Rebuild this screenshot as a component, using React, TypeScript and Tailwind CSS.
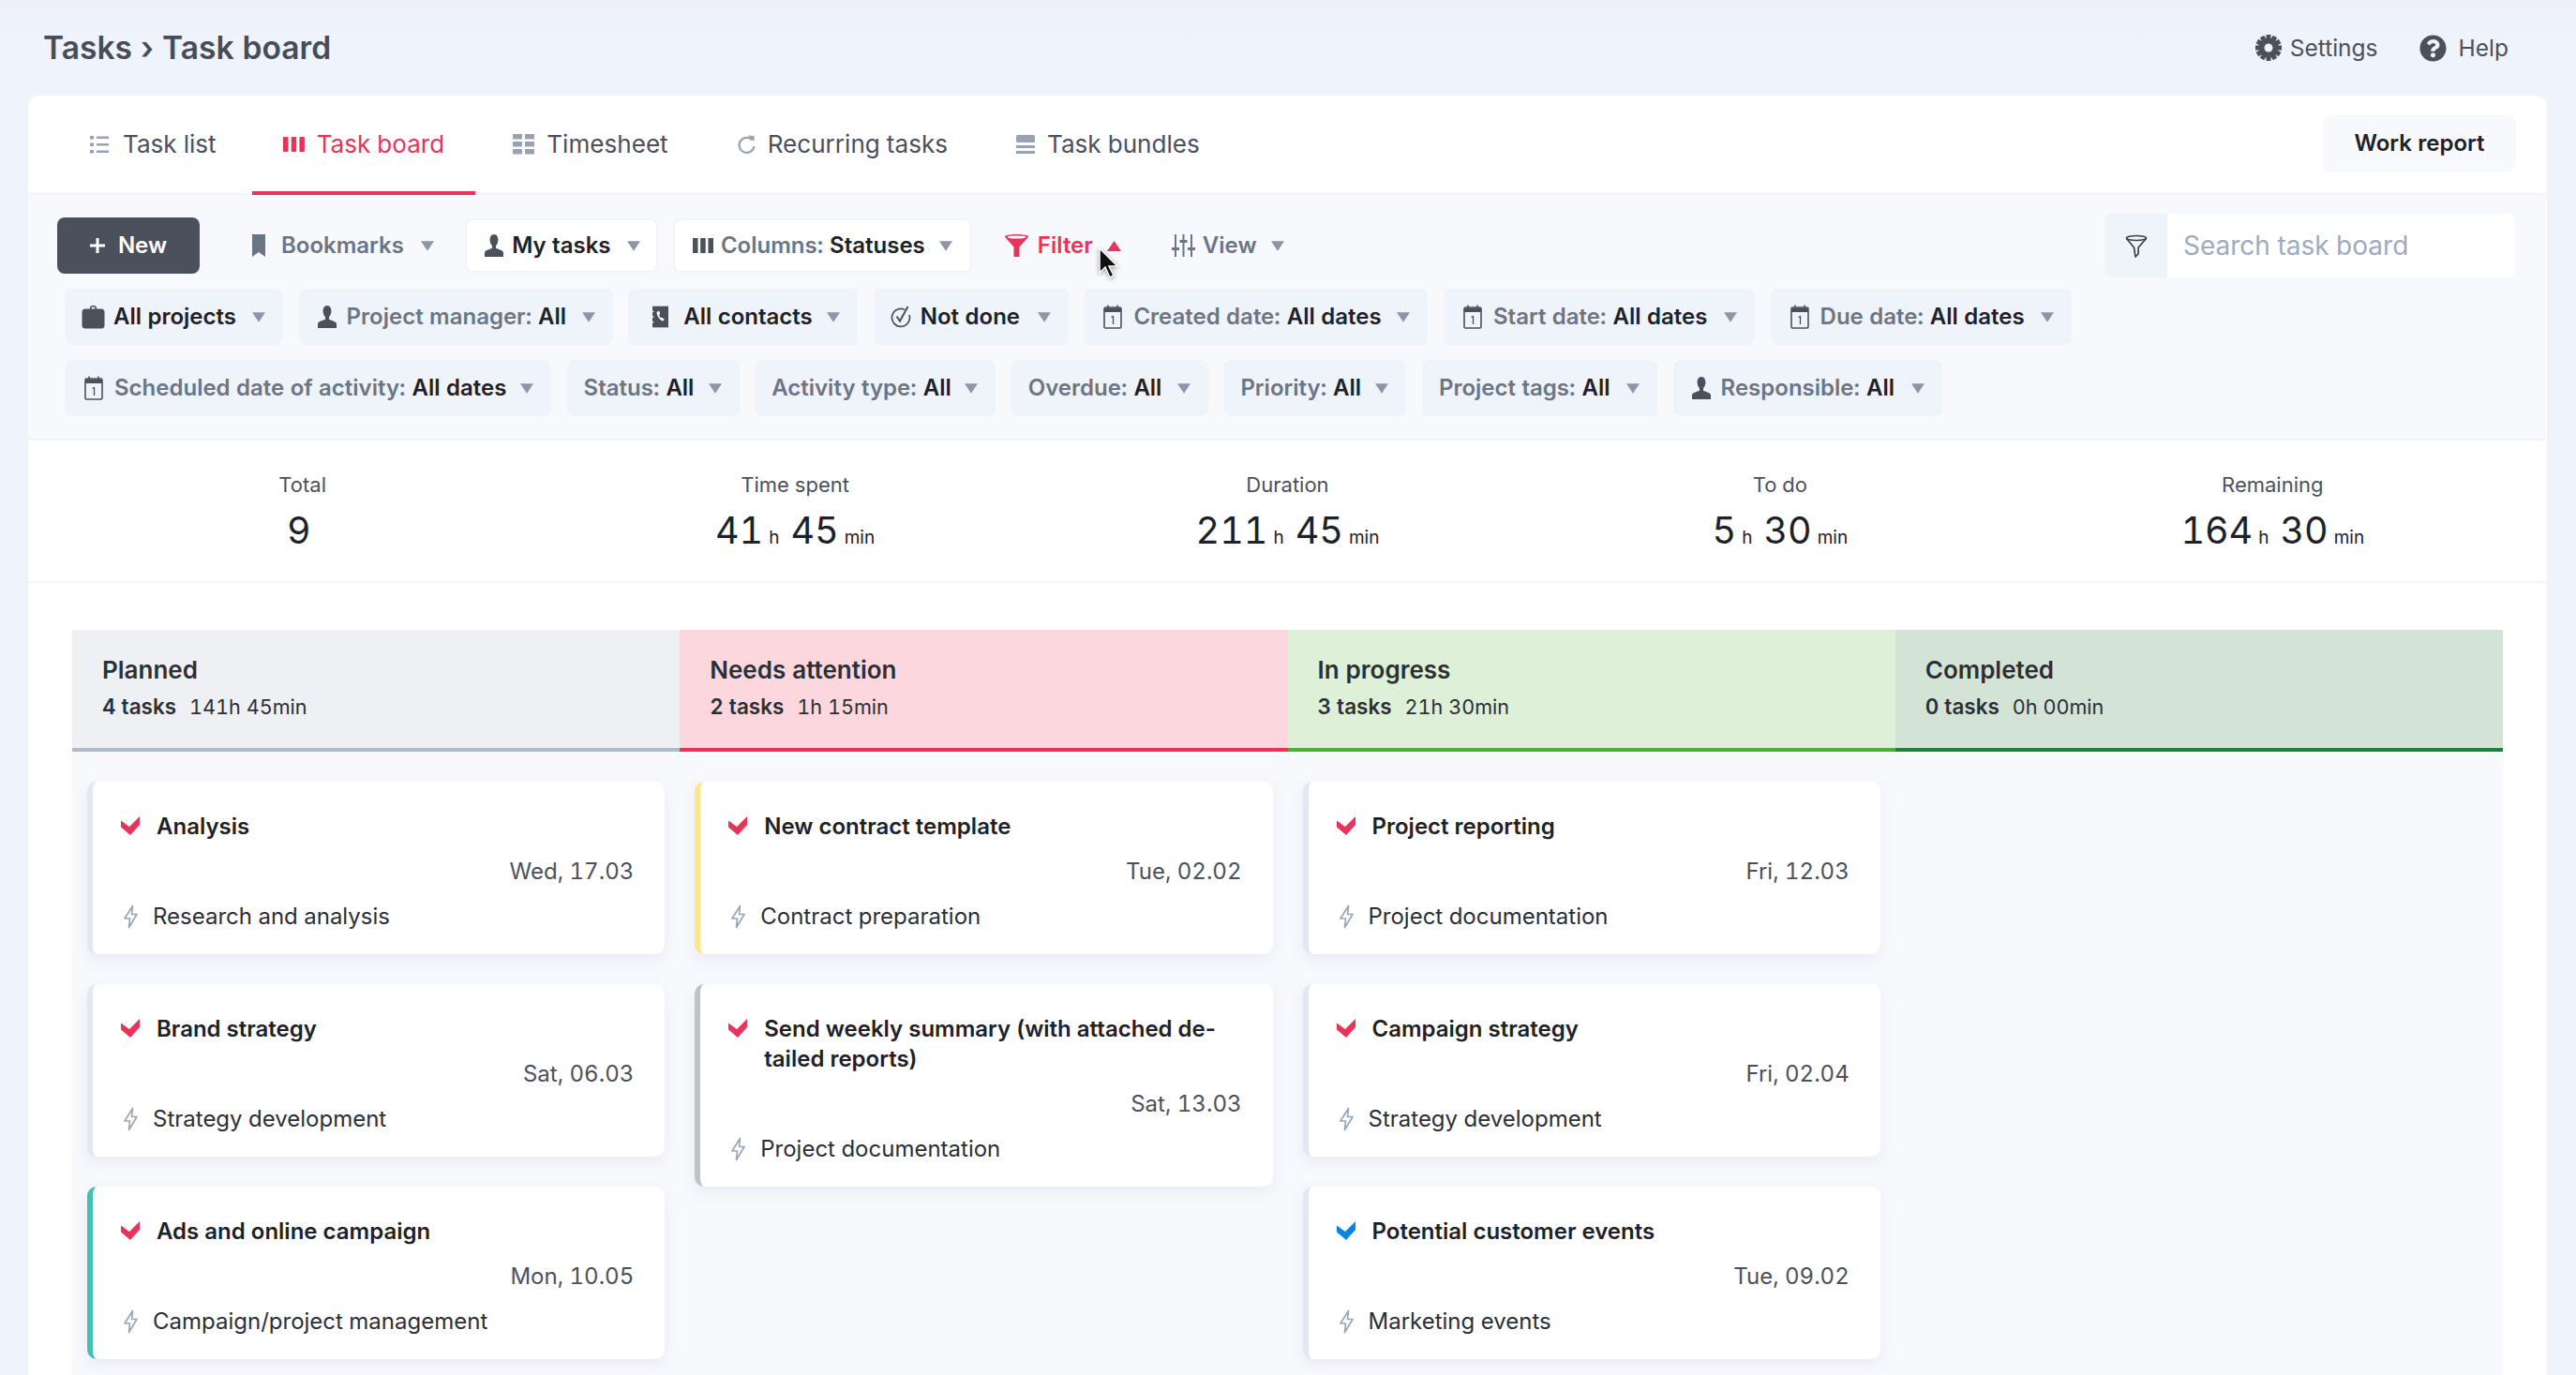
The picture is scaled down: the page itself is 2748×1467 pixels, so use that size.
import { FaQuestionCircle } from 'react-icons/fa';

const font = { fontFamily: 'Inter, "Noto Sans", sans-serif' };

function Caret({ up = false, color = 'fill-[#8d96a6]' }: { up?: boolean; color?: string }) {
  return (
    <svg width={up ? 15 : 14} height="11" viewBox="0 0 15 11" className={`shrink-0 ${color}`}>
      <path d={up ? 'M7.5 0 15 11H0z' : 'M0 0h15L7.5 11z'} />
    </svg>
  );
}

function PersonIcon({ className }: { className?: string }) {
  return (
    <svg width="24" height="24" viewBox="0 0 24 24" className={className} fill="currentColor">
      <path d="M12 0C9 0 7.600 2.800 7.600 6c0 2.600 1 4.800 2.400 6.200v2.600c-2.200 1.200-7 2-8 4.400V24h20v-4.800c-1-2.400-5.800-3.200-8-4.400v-2.600c1.400-1.400 2.400-3.600 2.400-6.200C16.400 2.800 15 0 12 0z" />
    </svg>
  );
}

function CalendarIcon() {
  return (
    <svg width="20" height="26" viewBox="0 0 20 26" className="mx-[3px] shrink-0 text-[#4b515c]">
      <rect x="1" y="3" width="18" height="22" rx="1.5" fill="none" stroke="currentColor" strokeWidth="1.6" />
      <path d="M1 3.500h18V8H1z" fill="currentColor" />
      <path d="M5 0.500v3M15 0.500v3" stroke="currentColor" strokeWidth="1.6" />
      <path d="M8.500 13.500 10.500 12.500V21" fill="none" stroke="currentColor" strokeWidth="1.300" />
    </svg>
  );
}

function BriefcaseIcon() {
  return (
    <svg width="25" height="26" viewBox="0 0 25 26" className="shrink-0 text-[#4b515c]" fill="currentColor">
      <path d="M9 3.500C9 2 10 1 11.500 1h2C15 1 16 2 16 3.500V5h-1.600V3.500c0-.6-.4-.9-.9-.9h-2c-.5 0-.9.3-.9.9V5H9z" />
      <rect x="0.500" y="4.500" width="24" height="21" rx="3.500" />
    </svg>
  );
}

function ContactsIcon() {
  return (
    <svg width="17" height="24" viewBox="0 0 18 24" className="ml-[8px] mr-[7px] shrink-0 text-[#4b515c]">
      <path d="M0 0h18v24H0z" fill="currentColor" />
      <path d="M5 6.500c-.5 3.500 2.500 8.500 6.500 10.500l2-2-3-2.500-1 .8c-1-1-1.800-2.400-2-3.800l1.200-.5-1-3.500z" fill="#fff" />
      <path d="M0 5l2 1-2 1zM0 11l2 1-2 1zM0 17l2 1-2 1z" fill="#fff" />
    </svg>
  );
}

function NotDoneIcon() {
  return (
    <svg width="22" height="24" viewBox="0 0 22 24" fill="none" className="mr-[1px] shrink-0 text-[#4b515c]" stroke="currentColor">
      <path d="M15 4.300A9.500 9.500 0 1 0 20 10" strokeWidth="1.700" />
      <path d="M6.500 11.500 10 16.500 18.500 1" strokeWidth="2" />
    </svg>
  );
}

function BoltIcon() {
  return (
    <svg width="15" height="26" viewBox="0 0 15 26" fill="none" className="shrink-0 text-[#9aa5b5]" stroke="currentColor" strokeWidth="1.700" strokeLinejoin="round">
      <path d="M9.500 1.500 1 15h5.500L5.500 24.500 14 10.500H8.500z" />
    </svg>
  );
}

function CheckMark({ color }: { color: string }) {
  return (
    <svg width="20" height="20" viewBox="0 0 20 20" className={`shrink-0 ${color}`} fill="currentColor">
      <path d="M0 4.500 9 11 20 0v9L10 20 0 11.500z" />
    </svg>
  );
}

function GearIcon() {
  const teeth = [0, 30, 60, 90, 120, 150];
  return (
    <svg width="28" height="28" viewBox="0 0 28 28" className="text-[#4b515c]">
      {teeth.map((a) => (
        <rect key={a} x="11.500" y="0" width="5" height="28" fill="currentColor" transform={`rotate(${a} 14 14)`} />
      ))}
      <circle cx="14" cy="14" r="10.500" fill="currentColor" />
      <circle cx="14" cy="14" r="4.500" fill="#eff3fb" />
    </svg>
  );
}

function TabIcon({ name, active }: { name: string; active?: boolean }) {
  const color = active ? 'text-[#e8345a]' : 'text-[#98a2b3]';
  if (name === 'list') {
    return (
      <svg width="20" height="20" viewBox="0 0 20 20" className={`mr-[2px] ${color}`} fill="currentColor">
        <path d="M0 1h4v3.500H0zM0 8.500h4V12H0zM0 16h4v3.500H0zM7 1.500h13v2.500H7zM7 9h13v2.500H7zM7 16.500h13V19H7z" />
      </svg>
    );
  }
  if (name === 'board') {
    return (
      <svg width="23" height="20" viewBox="0 0 23 20" className={color} fill="currentColor">
        <rect x="0" y="2" width="5.500" height="16" rx="1" />
        <rect x="8.700" y="2" width="5.500" height="16" rx="1" />
        <rect x="17.400" y="2" width="5.500" height="16" rx="1" />
      </svg>
    );
  }
  if (name === 'sheet') {
    return (
      <svg width="23" height="22" viewBox="0 0 23 22" className={color} fill="currentColor">
        <path d="M0 0h10v5.500H0zM13 0h10v5.500H13zM0 8h10v5.500H0zM13 8h10v5.500H13zM0 16h10v5.500H0zM13 16h10v5.500H13z" />
      </svg>
    );
  }
  if (name === 'repeat') {
    return (
      <svg width="20" height="22" viewBox="0 0 20 22" fill="none" className={color}>
        <path d="M16.500 6.500A8 8 0 1 0 18.500 13" stroke="currentColor" strokeWidth="2.200" />
        <path d="M11.500 1.500 18.500 2v6z" fill="currentColor" />
      </svg>
    );
  }
  return (
    <svg width="20" height="20" viewBox="0 0 20 20" className={color} fill="currentColor">
      <rect x="0" y="0" width="20" height="8" rx="1.500" />
      <rect x="0" y="11" width="20" height="3" />
      <rect x="0" y="17" width="20" height="3" />
    </svg>
  );
}

const tabs = [
  { label: 'Task list', icon: 'list' },
  { label: 'Task board', icon: 'board', active: true },
  { label: 'Timesheet', icon: 'sheet' },
  { label: 'Recurring tasks', icon: 'repeat' },
  { label: 'Task bundles', icon: 'bundle' },
];

function Chip({ icon, label, value, width }: { icon?: React.ReactNode; label?: string; value: string; width: string }) {
  return (
    <div className={`flex h-[60px] items-center rounded-lg bg-[#eff3fa] pl-[18px] pr-[19px] text-[24px] font-semibold ${width}`}>
      {icon && <span className="mr-[9px] flex shrink-0">{icon}</span>}
      {label && <span className="mr-[7px] text-[#6c7584]">{label}</span>}
      <span className="text-[#1e2127]">{value}</span>
      <span className="ml-auto"><Caret /></span>
    </div>
  );
}

function Stat({ label, parts }: { label: string; parts: [string, string][] }) {
  return (
    <div className="flex flex-col items-center">
      <div className="text-[22px] leading-[30px] text-[#4b515c]">{label}</div>
      <div className="mt-[9px] flex items-baseline gap-[12px] leading-[50px] text-[#1e2127]">
        {parts.map(([n, unit]) => (
          <span key={n} className="flex items-baseline gap-[6px]">
            <span className={`text-[39.500px] ${unit ? '' : 'mr-[8px]'}`}>{n}</span>
            {unit && <span className="text-[19px]">{unit}</span>}
          </span>
        ))}
      </div>
    </div>
  );
}

type Task = { title: string; date: string; sub: string; border: string; blue?: boolean };

const columns: { name: string; count: string; time: string; head: string; tasks: Task[] }[] = [
  {
    name: 'Planned',
    count: '4 tasks',
    time: '141h 45min',
    head: 'bg-[#eff0f4] border-[#aebbcc]',
    tasks: [
      { title: 'Analysis', date: 'Wed, 17.03', sub: 'Research and analysis', border: 'border-[#e2e8f1]' },
      { title: 'Brand strategy', date: 'Sat, 06.03', sub: 'Strategy development', border: 'border-[#e2e8f1]' },
      { title: 'Ads and online campaign', date: 'Mon, 10.05', sub: 'Campaign/project management', border: 'border-[#3fc1b4]' },
    ],
  },
  {
    name: 'Needs attention',
    count: '2 tasks',
    time: '1h 15min',
    head: 'bg-[#fcd7de] border-[#e8345a]',
    tasks: [
      { title: 'New contract template', date: 'Tue, 02.02', sub: 'Contract preparation', border: 'border-[#fde68a]' },
      { title: 'Send weekly summary (with attached de-tailed reports)', date: 'Sat, 13.03', sub: 'Project documentation', border: 'border-[#c2c2c2]' },
    ],
  },
  {
    name: 'In progress',
    count: '3 tasks',
    time: '21h 30min',
    head: 'bg-[#def0d8] border-[#4cae33]',
    tasks: [
      { title: 'Project reporting', date: 'Fri, 12.03', sub: 'Project documentation', border: 'border-[#e2e8f1]' },
      { title: 'Campaign strategy', date: 'Fri, 02.04', sub: 'Strategy development', border: 'border-[#e2e8f1]' },
      { title: 'Potential customer events', date: 'Tue, 09.02', sub: 'Marketing events', border: 'border-[#e2e8f1]', blue: true },
    ],
  },
  {
    name: 'Completed',
    count: '0 tasks',
    time: '0h 00min',
    head: 'bg-[#d3e4d7] border-[#1f7f3f]',
    tasks: [],
  },
];

function TaskCard({ task }: { task: Task }) {
  return (
    <div className={`rounded-[10px] border-l-[6px] bg-white pb-[24px] pl-[30px] pr-[33px] pt-[32px] shadow-[0_6px_16px_rgba(90,105,135,0.09)] ${task.border}`}>
      <div className="flex gap-[18px]">
        <span className="mt-[5px]"><CheckMark color={task.blue ? 'text-[#0a84e3]' : 'text-[#e8345a]'} /></span>
        <div className="text-[24px] font-semibold normal-nums leading-[32px] text-[#1e2127]">{task.title}</div>
      </div>
      <div className="mt-[16px] text-right text-[24px] leading-[32px] text-[#4b515c]">{task.date}</div>
      <div className="mt-[16px] flex items-center gap-[16px] pl-[3px] text-[24px] leading-[32px] text-[#2b2f36]">
        <BoltIcon />
        <span>{task.sub}</span>
      </div>
    </div>
  );
}

export default function App() {
  return (
    <div style={font} className="relative flex h-screen flex-col overflow-hidden bg-gradient-to-b from-[#edf0f8] via-[#eff3fb] via-[3%] to-[#eff3fb] tabular-nums">
      <header className="flex h-[102px] shrink-0 items-center justify-between pl-[46px] pr-[72px]">
        <div className="text-[33.600px] font-semibold text-[#474d58]">Tasks › Task board</div>
        <div className="flex items-center gap-[44px] text-[24.500px] text-[#4b515c]">
          <div className="flex items-center gap-[9px]"><GearIcon />Settings</div>
          <div className="flex items-center gap-[13px]"><FaQuestionCircle size={29} />Help</div>
        </div>
      </header>

      <main className="ml-[30px] flex w-[2687px] flex-1 flex-col rounded-t-xl bg-white">
        {/* tabs */}
        <div className="flex h-[106px] shrink-0 items-center justify-between border-b-2 border-[#eff3fa] pl-[33px] pr-[33px]">
          <div className="flex h-full gap-[7px]">
            {tabs.map((t) => (
              <div
                key={t.label}
                className={`flex h-[106px] items-center gap-[13px] border-b-[4px] px-[33px] pt-[1px] text-[26.100px] first:-mr-[2px] ${t.active ? 'border-[#e8345a] text-[#e8345a]' : 'border-transparent text-[#4b515c]'}`}
              >
                <TabIcon name={t.icon} active={t.active} />
                {t.label}
              </div>
            ))}
          </div>
          <div className="mb-[2px] flex h-[60px] w-[206px] items-center justify-center rounded-lg bg-[#f7f9fd] text-[24px] font-semibold text-[#1e2127]">
            Work report
          </div>
        </div>

        {/* toolbar */}
        <div className="h-[262px] shrink-0 border-b-2 border-[#eff3fa] bg-[#f7f9fd] pl-[31px] pr-[34px] pt-[20px]">
          <div className="flex h-[68px] items-center text-[24px] font-semibold text-[#6c7584]">
            <div className="flex h-[60px] w-[152px] items-center justify-center gap-[14px] rounded-lg bg-[#4b515c] text-white">
              <svg width="16" height="16" viewBox="0 0 16 16" fill="currentColor"><path d="M6.500 0h3v6.500H16v3H9.500V16h-3V9.500H0v-3h6.500z" /></svg>
              New
            </div>
            <div className="ml-[56px] flex items-center">
              <svg width="14" height="24" viewBox="0 0 14 24" className="text-[#6c7584]" fill="currentColor"><path d="M0 0h14v24l-7-5-7 5z" /></svg>
              <span className="ml-[17px]">Bookmarks</span>
              <span className="ml-[18px]"><Caret /></span>
            </div>
            <div className="ml-[33px] flex h-[58px] w-[206px] items-center justify-center rounded-lg border-2 border-[#f0f3fa] bg-white text-[#1e2127]">
              <PersonIcon className="text-[#4b515c]" />
              <span className="ml-[7px]">My tasks</span>
              <span className="ml-[17px]"><Caret /></span>
            </div>
            <div className="ml-[16px] flex h-[58px] w-[319px] items-center justify-center rounded-lg border-2 border-[#f0f3fa] bg-white">
              <svg width="22" height="16" viewBox="0 0 22 16" className="text-[#4b515c]" fill="currentColor"><path d="M0 0h5.500v16H0zM8.200 0h5.500v16H8.200zM16.500 0H22v16h-5.500z" /></svg>
              <span className="ml-[8px]">Columns:</span>
              <span className="ml-[7px] text-[#1e2127]">Statuses</span>
              <span className="ml-[15px]"><Caret /></span>
            </div>
            <div className="ml-[35px] flex items-center text-[#e8345a]">
              <svg width="25" height="24" viewBox="0 0 25 24">
                <path d="M0 2.500C0 1 5.500 0 12.500 0S25 1 25 2.500c0 .6-.4 1-1 1.500l-8.500 9.500V24h-6V13.500L1 4C.4 3.500 0 3.100 0 2.500z" fill="#e8345a" />
                <ellipse cx="12.500" cy="3" rx="10" ry="1.600" fill="#fff" />
              </svg>
              <span className="ml-[10px]">Filter</span>
              <span className="ml-[15px]"><Caret up color="fill-[#e8345a]" /></span>
            </div>
            <div className="ml-[54px] flex items-center">
              <svg width="25" height="24" viewBox="0 0 25 24" fill="currentColor">
                <path d="M3 0h2v24H3zM11.500 0h2v24h-2zM20 0h2v24h-2zM0 14h8v3H0zM8.500 6h8v3h-8zM17 14h8v3h-8z" />
              </svg>
              <span className="ml-[8px]">View</span>
              <span className="ml-[15px]"><Caret /></span>
            </div>
            <div className="ml-auto flex h-[68px] w-[438px] overflow-hidden rounded-lg bg-white">
              <div className="flex w-[67px] items-center justify-center bg-[#eff3fa]">
                <svg width="24" height="25" viewBox="0 0 24 25" fill="none" stroke="#3c414a" strokeWidth="1.700" strokeLinejoin="round">
                  <ellipse cx="12" cy="4" rx="10.500" ry="2.500" />
                  <path d="M1.500 4.500 9.500 14l1.500 10 3-3 .2-7L22.500 4.500" />
                </svg>
              </div>
              <div className="flex items-center pl-[17px] text-[28px] font-normal text-[#a0abbb]">Search task board</div>
            </div>
          </div>

          <div className="ml-[8px] mt-[12px] flex gap-[16.600px]">
            <Chip width="w-[233px]" icon={<BriefcaseIcon />} value="All projects" />
            <Chip width="w-[335px]" icon={<PersonIcon className="text-[#4b515c]" />} label="Project manager:" value="All" />
            <Chip width="w-[245px]" icon={<ContactsIcon />} value="All contacts" />
            <Chip width="w-[208px]" icon={<NotDoneIcon />} value="Not done" />
            <Chip width="w-[367px]" icon={<CalendarIcon />} label="Created date:" value="All dates" />
            <Chip width="w-[332px]" icon={<CalendarIcon />} label="Start date:" value="All dates" />
            <Chip width="w-[321px]" icon={<CalendarIcon />} label="Due date:" value="All dates" />
          </div>
          <div className="ml-[8px] mt-[16px] flex gap-[16.600px]">
            <Chip width="w-[519px]" icon={<CalendarIcon />} label="Scheduled date of activity:" value="All dates" />
            <Chip width="w-[184px]" label="Status:" value="All" />
            <Chip width="w-[257px]" label="Activity type:" value="All" />
            <Chip width="w-[210px]" label="Overdue:" value="All" />
            <Chip width="w-[195px]" label="Priority:" value="All" />
            <Chip width="w-[251px]" label="Project tags:" value="All" />
            <Chip width="w-[287px]" icon={<PersonIcon className="text-[#4b515c]" />} label="Responsible:" value="All" />
          </div>
        </div>

        {/* totals */}
        <div className="grid h-[152px] shrink-0 grid-cols-5 border-b-2 border-[#f3f5fa] px-[30px] pt-[32px]">
          <Stat label="Total" parts={[['9', '']]} />
          <Stat label="Time spent" parts={[['41', 'h'], ['45', 'min']]} />
          <Stat label="Duration" parts={[['211', 'h'], ['45', 'min']]} />
          <Stat label="To do" parts={[['5', 'h'], ['30', 'min']]} />
          <Stat label="Remaining" parts={[['164', 'h'], ['30', 'min']]} />
        </div>

        {/* board */}
        <div className="grid flex-1 grid-cols-4 bg-[#f7f9fd] mx-[47px] mt-[50px]">
          {columns.map((c) => (
            <div key={c.name}>
              <div className={`h-[130px] border-b-4 pl-[32px] pt-[27px] ${c.head}`}>
                <div className="text-[26px] font-semibold leading-[32px] text-[#2b2f36]">{c.name}</div>
                <div className="mt-[8px] flex items-baseline gap-[14px] leading-[30px] text-[#2b2f36]">
                  <span className="text-[22.500px] font-semibold">{c.count}</span>
                  <span className="text-[21.600px]">{c.time}</span>
                </div>
              </div>
              <div className="flex flex-col gap-[32px] px-[16px] pt-[32px]">
                {c.tasks.map((t) => (
                  <TaskCard key={t.title} task={t} />
                ))}
              </div>
            </div>
          ))}
        </div>
      </main>

      {/* mouse pointer */}
      <svg width="22" height="34" viewBox="0 0 22 34" className="absolute left-[1172px] top-[264px] drop-shadow-[0_1px_2px_rgba(0,0,0,0.4)]">
        <path d="M1 1v26l6-6 5 11 4-2-5-10h9z" fill="#111" stroke="#fff" strokeWidth="1.500" />
      </svg>
    </div>
  );
}
